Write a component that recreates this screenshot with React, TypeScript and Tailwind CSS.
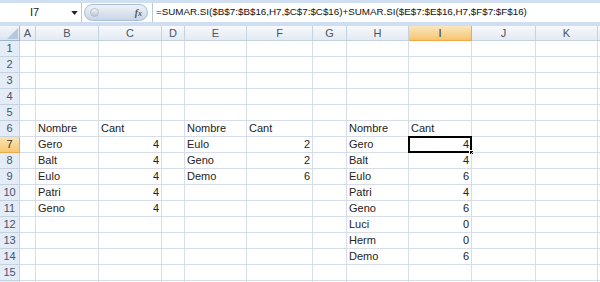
const cols = [
  { key: "A", w: 16 },
  { key: "B", w: 63 },
  { key: "C", w: 63 },
  { key: "D", w: 23 },
  { key: "E", w: 62 },
  { key: "F", w: 66 },
  { key: "G", w: 34 },
  { key: "H", w: 62 },
  { key: "I", w: 63 },
  { key: "J", w: 64 },
  { key: "K", w: 62 },
  { key: "L", w: 40 }
];

// cell values: [text, align]
const data: Record<string, [string, "l" | "r"]> = {
  B6: ["Nombre", "l"],
  C6: ["Cant", "l"],
  E6: ["Nombre", "l"],
  F6: ["Cant", "l"],
  H6: ["Nombre", "l"],
  I6: ["Cant", "l"],
  B7: ["Gero", "l"], C7: ["4", "r"],
  B8: ["Balt", "l"], C8: ["4", "r"],
  B9: ["Eulo", "l"], C9: ["4", "r"],
  B10: ["Patri", "l"], C10: ["4", "r"],
  B11: ["Geno", "l"], C11: ["4", "r"],
  E7: ["Eulo", "l"], F7: ["2", "r"],
  E8: ["Geno", "l"], F8: ["2", "r"],
  E9: ["Demo", "l"], F9: ["6", "r"],
  H7: ["Gero", "l"], I7: ["4", "r"],
  H8: ["Balt", "l"], I8: ["4", "r"],
  H9: ["Eulo", "l"], I9: ["6", "r"],
  H10: ["Patri", "l"], I10: ["4", "r"],
  H11: ["Geno", "l"], I11: ["6", "r"],
  H12: ["Luci", "l"], I12: ["0", "r"],
  H13: ["Herm", "l"], I13: ["0", "r"],
  H14: ["Demo", "l"], I14: ["6", "r"]
};

const rows = Array.from({ length: 16 }, (_, i) => i + 1);

export default function App() {
  return (
    <div
      className="w-[600px] h-[282px] overflow-hidden bg-white text-[11px] text-black"
      style={{ fontFamily: '"Liberation Sans", Arial, sans-serif' }}
    >
      {/* formula bar */}
      <div className="h-[26px] bg-[#cfdef0] pt-[3px] pb-[4px] flex">
        <div className="w-[82px] h-[19px] bg-white flex items-center relative border-r border-[#b9c9dc]">
          <span className="w-full text-center pr-[12px] text-[#222]">I7</span>
          <svg viewBox="0 0 8 5" className="absolute right-[3px] top-[8px] w-[7px] h-[4px]">
            <path d="M0 0h8L4 5z" fill="#222" />
          </svg>
        </div>
        <div className="w-[70px] h-[19px] bg-white flex items-center">
          <div className="ml-[2px] w-[64px] h-[17px] rounded-full bg-gradient-to-b from-[#eef3f9] to-[#c9d6e6] border border-[#a9bcd3] flex items-center justify-between px-[5px]">
            <div className="w-[9px] h-[9px] rounded-full bg-gradient-to-b from-[#f6f8fb] to-[#b7c4d4] border border-[#b4c1d1]" />
            <span className="italic font-bold text-[10px] text-[#505a66]" style={{ fontFamily: '"Liberation Serif", serif' }}>
              f<span className="text-[8px]">x</span>
            </span>
          </div>
        </div>
        <div className="flex-1 h-[19px] bg-white border-l border-[#b9c9dc] flex items-center pl-[3px] text-[9.8px] text-[#111] whitespace-nowrap overflow-hidden">
          =SUMAR.SI($B$7:$B$16,H7,$C$7:$C$16)+SUMAR.SI($E$7:$E$16,H7,$F$7:$F$16)
        </div>
      </div>

      {/* column headers */}
      <div className="flex h-[15px]">
        <div className="w-[20px] shrink-0 bg-gradient-to-b from-[#f3f6fa] to-[#dbe4ef] border-r border-b border-[#9eb6ce] flex items-end justify-end">
          <svg viewBox="0 0 10 10" className="w-[11px] h-[11px] mr-[1px] mb-[1px]">
            <path d="M10 0V10H0z" fill="#b8c8dc" />
          </svg>
        </div>
        {cols.map((c) => (
          <div
            key={c.key}
            style={{ width: c.w }}
            className={
              c.key === "I"
                ? "shrink-0 bg-gradient-to-b from-[#fbe6bd] to-[#f5c56e] border-r border-b border-[#f0a94a] flex items-center justify-center text-[#333]"
                : "shrink-0 bg-gradient-to-b from-[#f7f9fc] to-[#e4eaf2] border-r border-b border-[#c5d2e0] flex items-center justify-center text-[#4a5566]"
            }
          >
            {c.key === "L" ? "" : c.key}
          </div>
        ))}
      </div>

      {/* rows */}
      {rows.map((r) => (
        <div key={r} className="flex h-[16px]">
          <div
            className={
              r === 7
                ? "w-[20px] shrink-0 bg-gradient-to-b from-[#fbe3b4] to-[#f6c872] border-r border-b border-[#f0a94a] flex items-center justify-center text-[#333]"
                : "w-[20px] shrink-0 bg-[#e4ecf7] border-r border-b border-[#c5d2e0] flex items-center justify-center text-[#44546a]"
            }
          >
            {r < 16 ? r : ""}
          </div>
          {cols.map((c) => {
            const v = data[`${c.key}${r}`];
            const sel = c.key === "I" && r === 7;
            return (
              <div
                key={c.key}
                style={{ width: c.w }}
                className="shrink-0 relative border-r border-b border-[#d6dde8] flex items-center px-[2px]"
              >
                {v && (
                  <span className={v[1] === "r" ? "w-full text-right text-[#222]" : "w-full text-left text-[#222]"}>
                    {v[0]}
                  </span>
                )}
                {sel && (
                  <>
                    <div className="absolute left-[-1px] top-[-1px] right-[-1px] bottom-[-1px] border-2 border-black pointer-events-none" />
                    <div className="absolute right-[-3px] bottom-[-3px] w-[5px] h-[5px] bg-black border border-white" />
                  </>
                )}
              </div>
            );
          })}
        </div>
      ))}
    </div>
  );
}
